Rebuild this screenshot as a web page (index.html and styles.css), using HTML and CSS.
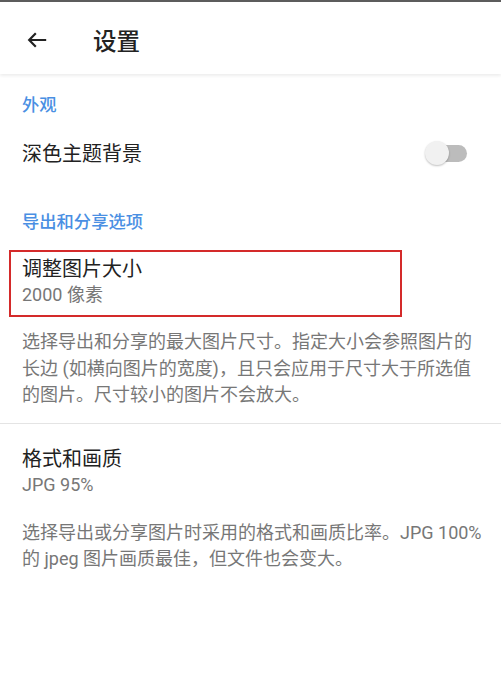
FILE: index.html
```html
<!DOCTYPE html>
<html lang="zh-CN">
<head>
<meta charset="utf-8">
<title>设置</title>
<link rel="stylesheet" href="styles.css">
</head>
<body>
<div class="screen">
  <header class="appbar">
    <span class="back" aria-label="返回">
      <svg width="20" height="16" viewBox="0 0 20 16"><path d="M19.2 8H2.4M8.8 1.3L2.2 8l6.6 6.7" fill="none" stroke="#222" stroke-width="2.2"/></svg>
    </span>
    <h1 class="title">设置</h1>
  </header>
  <main class="content">
    <div class="cat cat-first">外观</div>
    <div class="row-switch">
      <span class="row-title">深色主题背景</span>
      <span class="switch"><span class="track"></span><span class="thumb"></span></span>
    </div>
    <div class="cat cat-second">导出和分享选项</div>
    <div class="pref highlighted">
      <div class="row-title">调整图片大小</div>
      <div class="row-sub">2000 像素</div>
    </div>
    <p class="desc desc-first">选择导出和分享的最大图片尺寸。指定大小会参照图片的<br>长边 (如横向图片的宽度)，且只会应用于尺寸大于所选值<br>的图片。尺寸较小的图片不会放大。</p>
    <div class="divider"></div>
    <div class="pref pref-quality">
      <div class="row-title">格式和画质</div>
      <div class="row-sub">JPG 95%</div>
    </div>
    <p class="desc desc-second">选择导出或分享图片时采用的格式和画质比率。JPG 100%<br>的 jpeg 图片画质最佳，但文件也会变大。</p>
  </main>
</div>
</body>
</html>
```
FILE: styles.css
```css
html, body {
  margin: 0;
  padding: 0;
  background: #ffffff;
}
body {
  font-family: Roboto, "Noto Sans CJK SC", sans-serif;
  color: #222222;
}
.screen {
  width: 501px;
  min-height: 691px;
  border-top: 2px solid #5c5c5c;
  box-sizing: border-box;
  background: #ffffff;
  overflow: hidden;
}
.appbar {
  height: 72px;
  box-sizing: border-box;
  padding-top: 4px;
  display: flex;
  align-items: center;
  box-shadow: 0 2px 3px rgba(0, 0, 0, 0.07);
  position: relative;
}
.back {
  display: flex;
  width: 20px;
  height: 16px;
  margin-left: 27px;
}
.title {
  margin: 0 0 0 46px;
  font-size: 23.5px;
  font-weight: 500;
  line-height: 30px;
  color: #222222;
  font-family: "Noto Sans CJK SC", sans-serif;
}
.content {
  padding: 0;
}
.cat {
  padding-left: 22px;
  font-size: 17.3px;
  line-height: 24px;
  font-weight: 500;
  color: #4a8fe3;
  font-family: "Noto Sans CJK SC", sans-serif;
}
.cat-first { padding-top: 18px; }
.cat-second { padding-top: 17px; }
.row-switch {
  height: 76px;
  display: flex;
  align-items: center;
  justify-content: space-between;
  padding: 0 34px 0 22px;
}
.row-title {
  font-size: 20px;
  line-height: 26px;
  color: #222222;
}
.row-sub {
  font-size: 18px;
  line-height: 24px;
  margin-top: 1px;
  color: #777777;
}
.switch {
  position: relative;
  width: 42px;
  height: 26px;
  display: block;
}
.track {
  position: absolute;
  right: 0;
  top: 4px;
  width: 36px;
  height: 17px;
  border-radius: 9px;
  background: #bcbcbc;
}
.thumb {
  position: absolute;
  left: 0;
  top: 0;
  width: 24px;
  height: 24px;
  border-radius: 50%;
  background: #f1f1f1;
  box-shadow: 0 1px 2px rgba(0, 0, 0, 0.25);
}
.pref {
  padding-left: 22px;
}
.highlighted {
  margin: 17px 0 0 9px;
  width: 393px;
  box-sizing: border-box;
  border: 2px solid #d42a2a;
  padding: 4px 0 8px 11px;
}
.desc {
  margin: 0;
  padding: 0 0 0 22px;
  font-size: 18px;
  letter-spacing: 0;
  line-height: 26.5px;
  color: #777777;
  white-space: nowrap;
}
.desc-first { margin-top: 12px; }
.divider {
  margin-top: 14px;
  height: 1px;
  background: #e4e4e4;
}
.pref-quality { margin-top: 22px; }
.desc-second { margin-top: 23px; }
```
